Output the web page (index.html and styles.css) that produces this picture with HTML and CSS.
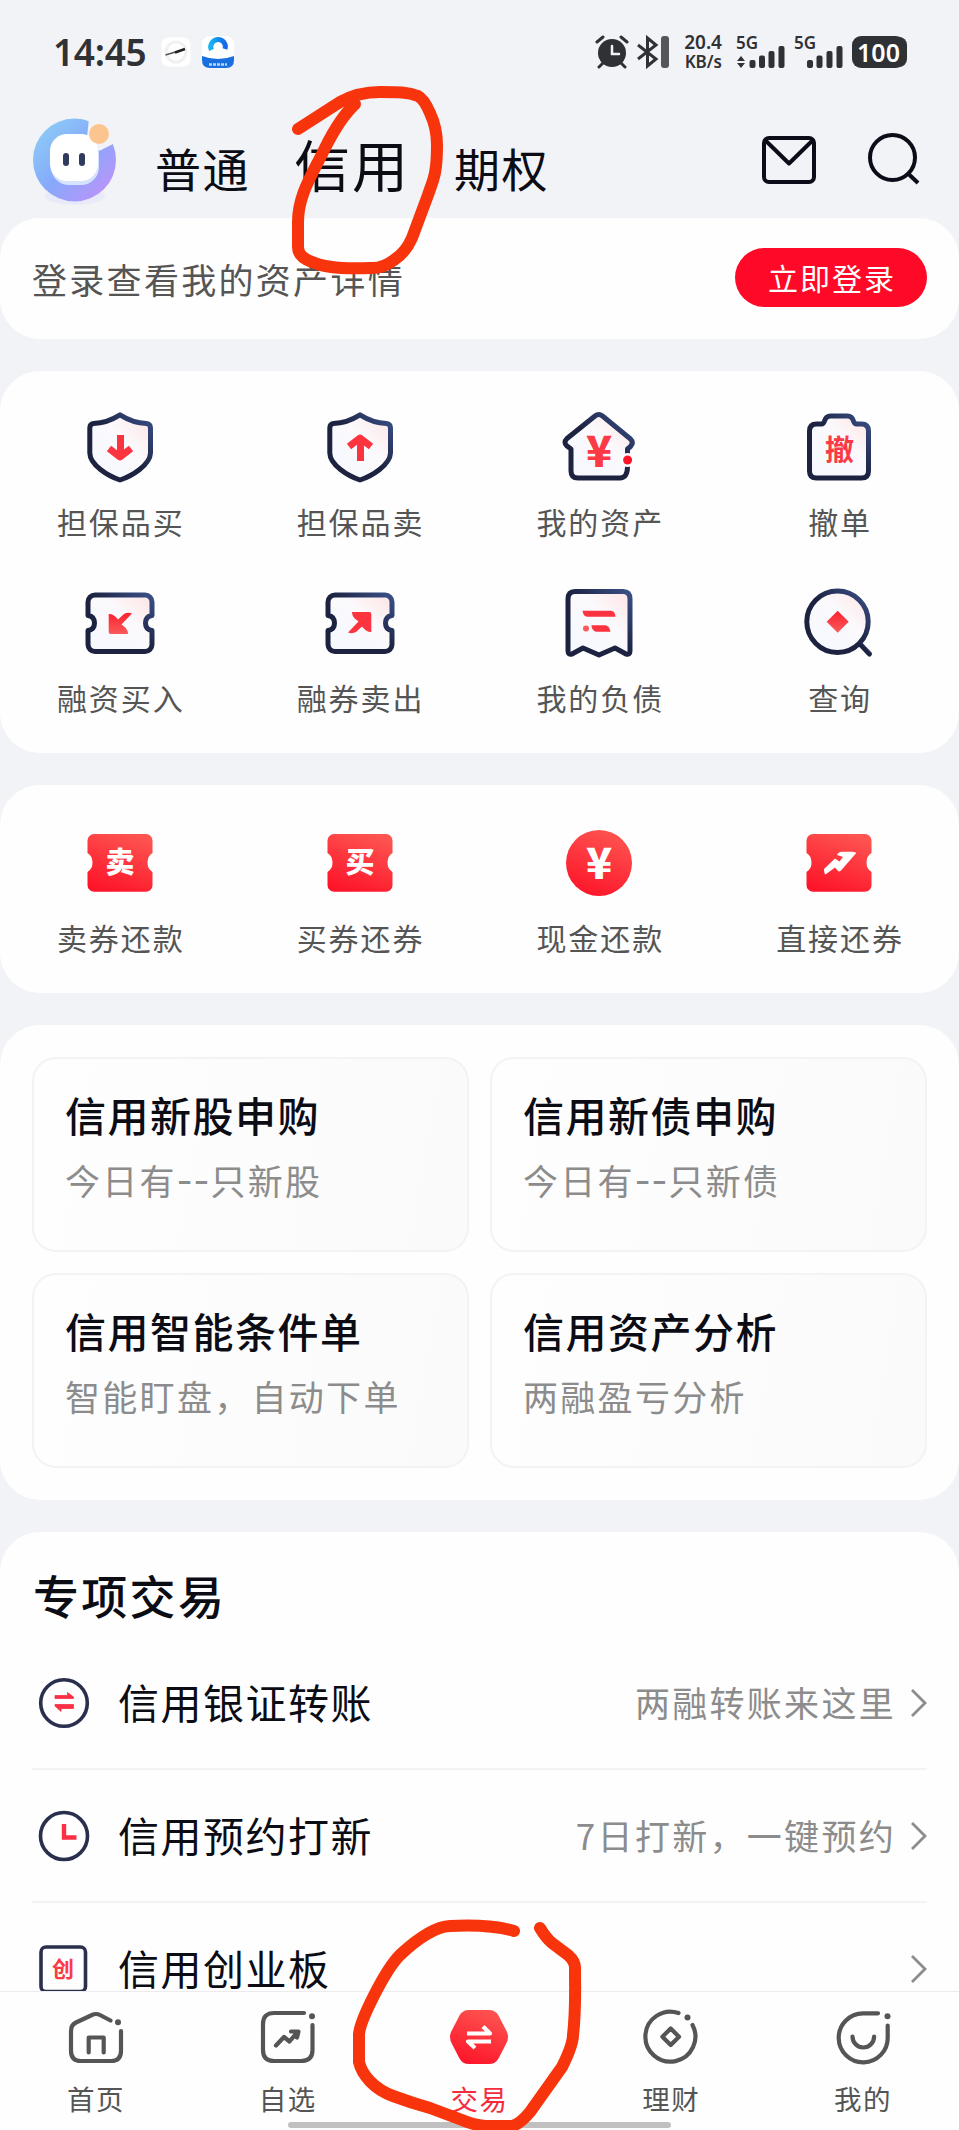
FILE: index.html
```html
<!DOCTYPE html>
<html lang="zh-CN">
<head>
    <meta charset="UTF-8">
    <meta name="viewport" content="width=device-width, initial-scale=1.0">
    <title>信用交易</title>
    <link rel="stylesheet" href="styles.css">
</head>
<body>
    <!-- Shared gradients -->
    <svg class="defs" width="0" height="0">
        <defs>
            <linearGradient id="navy" x1="0" y1="1" x2="1" y2="0">
                <stop offset="0.5" stop-color="#1c2240"/>
                <stop offset="1" stop-color="#3a5088"/>
            </linearGradient>
            <linearGradient id="tint" x1="0" y1="1" x2="1" y2="0">
                <stop offset="0.3" stop-color="#f8f9fe"/>
                <stop offset="0.6" stop-color="#fbf9fc"/>
                <stop offset="1" stop-color="#ffe3e3"/>
            </linearGradient>
            <linearGradient id="red" x1="0" y1="0" x2="0" y2="1">
                <stop offset="0" stop-color="#fa2230"/>
                <stop offset="1" stop-color="#fb5a5a"/>
            </linearGradient>
            <linearGradient id="redfill" x1="0.7" y1="0" x2="0.3" y2="1">
                <stop offset="0" stop-color="#fd5450"/>
                <stop offset="1" stop-color="#fd1529"/>
            </linearGradient>
            <linearGradient id="ring" x1="0" y1="0" x2="1" y2="1">
                <stop offset="0.1" stop-color="#8ccbf6"/>
                <stop offset="0.5" stop-color="#86a9fb"/>
                <stop offset="0.85" stop-color="#b596fa"/>
            </linearGradient>
            <linearGradient id="cloud" x1="0" y1="0" x2="1" y2="0">
                <stop offset="0" stop-color="#17b3f5"/>
                <stop offset="1" stop-color="#1468e8"/>
            </linearGradient>
        </defs>
    </svg>

    <div class="screen">
        <!-- Status bar -->
        <div class="status">
            <span class="time">14:45</span>
            <svg class="app-a" width="30" height="30" viewBox="0 0 30 30">
                <rect x="0.5" y="0.5" width="29" height="29" rx="7" fill="#fff"/>
                <circle cx="15" cy="15" r="10" fill="none" stroke="#f0f1f2" stroke-width="3"/>
                <path d="M4.500 18l10-3" stroke="#555" stroke-width="1.500"/>
                <path d="M14 15.500l10-3.500" stroke="#222" stroke-width="2.500"/>
            </svg>
            <svg class="app-b" width="32" height="32" viewBox="0 0 32 32">
                <rect x="0" y="0" width="32" height="32" rx="8" fill="#fff"/>
                <path d="M0 20q16 6 32 0v4q0 8-8 8H8q-8 0-8-8z" fill="#1a6fe0"/>
                <path d="M9.500 14a7.300 7.300 0 1 1 13.500-1" fill="none" stroke="url(#cloud)" stroke-width="5"/>
                <path d="M7 28.500h18" stroke="#b9d6fa" stroke-width="2.500" stroke-dasharray="3 1"/>
            </svg>
            <div class="status-right">
                <svg class="alarm" width="34" height="34" viewBox="0 0 34 34" fill="none" stroke="#303135" stroke-linecap="round">
                    <circle cx="17" cy="18" r="14" fill="#303135" stroke="none"/>
                    <path d="M2 7l6-5M26 2l6 5M8 28l-4 4M26 28l4 4" stroke-width="3"/>
                    <path d="M17 11v8h7" stroke="#f2f3f7" stroke-width="2.500"/>
                </svg>
                <svg class="bluetooth" width="33" height="34" viewBox="0 0 33 34" fill="none" stroke="#303135" stroke-width="3">
                    <path d="M1 10l18 14-8.500 7V3l8.500 7L1 24"/>
                    <rect x="24" y="1" width="8" height="32" rx="3" fill="#55565a" stroke="none"/>
                </svg>
                <div class="speed">
                    <span class="num">20.4</span>
                    <span class="unit">KB/s</span>
                </div>
                <svg class="signal" width="50" height="44" viewBox="0 -5 50 44" fill="#303135">
                    <text x="0" y="14" class="net">5G</text>
                    <path d="M5 21l4 5H1zM5 33l-4-5h8z"/>
                    <rect x="13.500" y="25" width="6" height="8" rx="2"/>
                    <rect x="23" y="20.500" width="6" height="12.500" rx="2"/>
                    <rect x="32.500" y="16" width="6" height="17" rx="2"/>
                    <rect x="42.500" y="11" width="6" height="22" rx="2"/>
                </svg>
                <svg class="signal" width="50" height="44" viewBox="0 -5 50 44" fill="#303135">
                    <text x="0" y="14" class="net">5G</text>
                    <rect x="13" y="25" width="6" height="8" rx="2"/>
                    <rect x="22.500" y="20.500" width="6" height="12.500" rx="2"/>
                    <rect x="32.500" y="16" width="6" height="17" rx="2"/>
                    <rect x="42.500" y="11" width="6" height="22" rx="2"/>
                </svg>
                <div class="battery">100</div>
            </div>
        </div>

        <!-- Header tabs -->
        <div class="header">
            <svg class="avatar" width="84" height="90" viewBox="0 0 84 90">
                <ellipse cx="42" cy="78" rx="30" ry="9" fill="#e8eafa"/>
                <circle cx="41.500" cy="42" r="41.500" fill="url(#ring)"/>
                <path d="M56 0l28 0v24l-18 9-12-14z" fill="#f2f3f7"/>
                <rect x="18" y="18" width="48" height="49" rx="18" fill="#d5e3ff"/>
                <rect x="17" y="16" width="48" height="47" rx="17" fill="#fff"/>
                <circle cx="66" cy="16" r="10" fill="#fcc48e"/>
                <rect x="30" y="35" width="6" height="13" rx="3" fill="#2f3a5c"/>
                <rect x="46" y="35" width="6" height="13" rx="3" fill="#2f3a5c"/>
            </svg>
            <div class="tabs">
                <span class="tab">普通</span>
                <span class="tab active">信用</span>
                <span class="tab">期权</span>
            </div>
            <svg class="mail" width="54" height="48" viewBox="0 0 54 48" fill="none" stroke="#0b0c18" stroke-width="4" stroke-linejoin="round">
                <rect x="2" y="2" width="50" height="44" rx="5"/>
                <path d="M3.500 4.500L27 27.500 50.500 4.500"/>
            </svg>
            <svg class="search" width="52" height="52" viewBox="0 0 52 52" fill="none" stroke="#0b0c18" stroke-width="4">
                <circle cx="24.500" cy="24.500" r="22.500"/>
                <path d="M39.500 40l10.500 10"/>
            </svg>
        </div>

        <!-- Login -->
        <div class="card login">
            <span class="login-text">登录查看我的资产详情</span>
            <button class="login-btn">立即登录</button>
        </div>

        <!-- Trade shortcuts -->
        <div class="card grid">
            <div class="item">
                <svg class="icon" viewBox="0 0 80 80">
                    <path class="line" d="M40 7.800Q27 16 13.500 16.500 9.800 17 9.800 21V46C10 58 28 69 40 73 52 69 70 58 70.500 46V21Q70.500 17 66.500 16.500 53 16 40 7.800z"/>
                    <path class="mark" d="M40.500 28V48M29 41.500l11 8.500 11-8.500"/>
                </svg>
                <span class="label">担保品买</span>
            </div>
            <div class="item">
                <svg class="icon" viewBox="0 0 80 80">
                    <path class="line" d="M40 7.800Q27 16 13.500 16.500 9.800 17 9.800 21V46C10 58 28 69 40 73 52 69 70 58 70.500 46V21Q70.500 17 66.500 16.500 53 16 40 7.800z"/>
                    <path class="mark" d="M40.500 54V32M29 39.500l11-8.500 11 8.500"/>
                </svg>
                <span class="label">担保品卖</span>
            </div>
            <div class="item">
                <svg class="icon" viewBox="0 0 80 80">
                    <path class="line" d="M68.500 45.500V42l3-2.500q3.500-4 0-7.500L43.500 9q-3.800-3-7.500 0L8 31.500q-4 4 0 7.500l4 3V64q0 7 7 7h42q7 0 7.500-10.500"/>
                    <circle cx="68.600" cy="53" r="7" fill="#fefefe"/>
                    <circle cx="68.600" cy="53" r="4.500" fill="#fd1529"/>
                    <text class="sign" x="40" y="60">¥</text>
                </svg>
                <span class="label">我的资产</span>
            </div>
            <div class="item">
                <svg class="icon" viewBox="0 0 80 80">
                    <path class="line" d="M10.500 24q0-7 7-7h5q2 0 3-3 1.500-5 6-5h17q4.500 0 6 5 1 3 3 3h5q7 0 7 7v40q0 7-7 7h-45q-7 0-7-7z"/>
                    <text class="char" x="40.500" y="53.500">撤</text>
                </svg>
                <span class="label">撤单</span>
            </div>
            <div class="item">
                <svg class="icon" viewBox="0 0 80 80">
                    <path class="line" d="M15 12h50a7 7 0 0 1 7 7v13.500q-6.500 1-6.500 7.500t6.500 7.500v14a7 7 0 0 1-7 7H15a7 7 0 0 1-7-7v-14q6.500-1 6.500-7.500T8 32.500V19a7 7 0 0 1 7-7z"/>
                    <path d="M28.700 31q4-0.500 8 4l1.300 1.500 6-5.500q3.500-2 8-0.500L41.500 41.500l2.500 2q4 3 4 7.500H30.500q-1.800 0-1.800-2z" fill="url(#red)"/>
                </svg>
                <span class="label">融资买入</span>
            </div>
            <div class="item">
                <svg class="icon" viewBox="0 0 80 80">
                    <path class="line" d="M15 12h50a7 7 0 0 1 7 7v13.500q-6.500 1-6.500 7.500t6.500 7.500v14a7 7 0 0 1-7 7H15a7 7 0 0 1-7-7v-14q6.500-1 6.500-7.500T8 32.500V19a7 7 0 0 1 7-7z"/>
                    <path d="M28.700 31q4-0.500 8 4l1.300 1.500 6-5.500q3.500-2 8-0.500L41.500 41.500l2.500 2q4 3 4 7.500H30.500q-1.800 0-1.800-2z" fill="#fb3440" transform="rotate(180 40 40)"/>
                </svg>
                <span class="label">融券卖出</span>
            </div>
            <div class="item">
                <svg class="icon" viewBox="0 0 80 80">
                    <path class="line" d="M9 16q0-7.500 7-7.500h48q7 0 7 7.500v52q0 4-4 3l-11-6-16 7-16-7-11 6q-4 1-4-3z"/>
                    <path d="M23.500 27.700H52q4 0 4.500 6H29q-5 0-5.500-6zM32.300 42.300H46q4 0 5.500 6.400H37q-4-1-4.700-6.400z" fill="#fb3340"/>
                    <circle cx="27" cy="45.500" r="3" fill="#fb5a5a"/>
                </svg>
                <span class="label">我的负债</span>
            </div>
            <div class="item">
                <svg class="icon" viewBox="0 0 80 80">
                    <circle class="line" cx="38.500" cy="38.700" r="30.700"/>
                    <path class="line" d="M61.500 61.500l9 9.500"/>
                    <path d="M38.700 27.700l11 11-11 11-11-11z" fill="url(#red)"/>
                </svg>
                <span class="label">查询</span>
            </div>
        </div>

        <!-- Repayment shortcuts -->
        <div class="card grid repay">
            <div class="item">
                <svg class="icon" viewBox="0 0 80 80">
                    <path d="M14 11h52a6.500 6.500 0 0 1 6.500 6.500V30q-5 3-5 9.500t5 9.500v13.500A6.500 6.500 0 0 1 66 68.700H14a6.500 6.500 0 0 1-6.500-6.500V49q5-3 5-9.500t-5-9.500V17.500A6.500 6.500 0 0 1 14 11z" fill="url(#redfill)"/>
                    <text class="char white" x="40" y="50">卖</text>
                </svg>
                <span class="label">卖券还款</span>
            </div>
            <div class="item">
                <svg class="icon" viewBox="0 0 80 80">
                    <path d="M14 11h52a6.500 6.500 0 0 1 6.500 6.500V30q-5 3-5 9.500t5 9.500v13.500A6.500 6.500 0 0 1 66 68.700H14a6.500 6.500 0 0 1-6.500-6.500V49q5-3 5-9.500t-5-9.500V17.500A6.500 6.500 0 0 1 14 11z" fill="url(#redfill)"/>
                    <text class="char white" x="40" y="50">买</text>
                </svg>
                <span class="label">买券还券</span>
            </div>
            <div class="item">
                <svg class="icon" viewBox="0 0 80 80">
                    <circle cx="40" cy="40" r="33" fill="url(#redfill)"/>
                    <text class="sign white" x="40" y="55.500">¥</text>
                </svg>
                <span class="label">现金还款</span>
            </div>
            <div class="item">
                <svg class="icon" viewBox="0 0 80 80">
                    <path d="M14 11h52a6.500 6.500 0 0 1 6.500 6.500V30q-5 3-5 9.500t5 9.500v13.500A6.500 6.500 0 0 1 66 68.700H14a6.500 6.500 0 0 1-6.500-6.500V49q5-3 5-9.500t-5-9.500V17.500A6.500 6.500 0 0 1 14 11z" fill="url(#redfill)"/>
                    <path d="M25 46l11-10.500 4.500 3L44 34l-6-2q1-3 5-3.300h10q4 0 4 1.500L42 47.500q-2 1.500-3 0.500l-3-3.500-9.500 7q-1.500-1-1.500-5.500z" fill="#fff"/>
                </svg>
                <span class="label">直接还券</span>
            </div>
        </div>

        <!-- Feature tiles -->
        <div class="card tiles">
            <div class="tile">
                <h3>信用新股申购</h3>
                <p>今日有<span class="dash">--</span>只新股</p>
            </div>
            <div class="tile">
                <h3>信用新债申购</h3>
                <p>今日有<span class="dash">--</span>只新债</p>
            </div>
            <div class="tile">
                <h3>信用智能条件单</h3>
                <p>智能盯盘，自动下单</p>
            </div>
            <div class="tile">
                <h3>信用资产分析</h3>
                <p>两融盈亏分析</p>
            </div>
        </div>

        <!-- Special trades -->
        <div class="card special">
            <h2>专项交易</h2>
            <div class="row">
                <svg class="row-icon" viewBox="0 0 60 60" fill="none">
                    <circle cx="30" cy="30" r="23.300" stroke="#2a2f4d" stroke-width="3.600"/>
                    <path d="M21 25.500h18.500V24l-6-4.500v3H21zM39.500 31.500H21V33l6 5.500v-3h12.500z" fill="#fb3045" stroke="#fb3045" stroke-width="0.800"/>
                </svg>
                <span class="name">信用银证转账</span>
                <span class="hint">两融转账来这里</span>
                <svg class="arrow" width="18" height="30" viewBox="0 0 18 30"><path d="M2 2l13 13L2 28"/></svg>
            </div>
            <div class="row">
                <svg class="row-icon" viewBox="0 0 60 60" fill="none">
                    <circle cx="30" cy="30" r="23.500" stroke="#2a2f4d" stroke-width="3.600"/>
                    <path d="M30 18v13.500h12.500" stroke="#fb3045" stroke-width="4.400"/>
                </svg>
                <span class="name">信用预约打新</span>
                <span class="hint">7日打新，一键预约</span>
                <svg class="arrow" width="18" height="30" viewBox="0 0 18 30"><path d="M2 2l13 13L2 28"/></svg>
            </div>
            <div class="row">
                <svg class="row-icon" viewBox="0 0 60 60" fill="none">
                    <rect x="7" y="8" width="44.500" height="44.500" rx="5" stroke="#2a2f4d" stroke-width="3.600"/>
                    <text class="char small" x="29" y="38">创</text>
                </svg>
                <span class="name">信用创业板</span>
                <span class="hint"></span>
                <svg class="arrow" width="18" height="30" viewBox="0 0 18 30"><path d="M2 2l13 13L2 28"/></svg>
            </div>
        </div>
    </div>

    <!-- Bottom navigation -->
    <div class="nav">
        <div class="nav-item">
            <svg class="nav-icon" viewBox="0 0 60 60">
                <path d="M44.500 13.500L34 8q-4-2-8 0l-16 7.500Q5 18 5 24v20q0 10 10 10h30q10 0 10-10V24M22.700 45.500v-15h15v15"/>
                <circle cx="52" cy="15.300" r="3"/>
            </svg>
            <span>首页</span>
        </div>
        <div class="nav-item">
            <svg class="nav-icon" viewBox="0 0 60 60">
                <path d="M46 6H16Q5 6 5 17v26q0 11 11 11h27q11.500 0 11.500-11V18M18 38.500l8-8.500 5.500 4.500 8-9.500M33 24.500h7.500L39 30.500"/>
                <circle cx="54" cy="9.300" r="3"/>
            </svg>
            <span>自选</span>
        </div>
        <div class="nav-item current">
            <svg class="nav-icon" viewBox="0 0 60 60">
                <path class="hex" d="M20 3h20q6.500 0 9.500 5.500L57 23q4 7 0 14l-7.500 14.500Q46.500 57 40 57H20q-6.500 0-9.500-5.500L3 37q-4-7 0-14l7.500-14.500Q13.500 3 20 3z"/>
                <path class="swap" d="M18 26.500h23L34 19.500M42 34.500H19l7 6.500"/>
            </svg>
            <span>交易</span>
        </div>
        <div class="nav-item">
            <svg class="nav-icon" viewBox="0 0 60 60">
                <path d="M37.500 6A25 25 0 1 0 51.500 18M29.700 21.500l8.300 8.300-8.300 8.300-8.300-8.300z"/>
                <circle cx="46.500" cy="10.500" r="3"/>
            </svg>
            <span>理财</span>
        </div>
        <div class="nav-item">
            <svg class="nav-icon" viewBox="0 0 60 60">
                <path d="M45 6.300H30A24.500 24.500 0 1 0 54.700 30V18.500M19.500 29.500a10.800 11 0 0 0 21.600 0"/>
                <circle cx="54.500" cy="9.200" r="3"/>
            </svg>
            <span>我的</span>
        </div>
        <div class="home-bar"></div>
    </div>

    <!-- Hand-drawn markers -->
    <svg class="marks" width="959" height="2130" viewBox="0 0 959 2130">
        <path d="M298 129L340 102Q358 92 380 92C398 92 408 92 418 96Q424 99 430 113Q437 128 437 145C437 175 433 180 428 195L412 238Q406 252 394 260Q382 269 370 268C345 269 325 268 312 262Q298 257 298 247V222C298 195 312 175 325 148Q340 118 355 104"/>
        <path d="M514 1931Q490 1924 450 1926Q430 1927 400 1955C385 1970 359 2022 359 2035V2062C362 2075 374 2089 393 2096Q412 2103 430 2108L462 2120Q474 2125 485 2126H512Q520 2124 530 2112L562 2067Q573 2045 573 2035C576 2010 575 1990 575 1970Q576 1962 568 1955L552 1943Q546 1938 540 1928"/>
    </svg>
</body>
</html>
```
FILE: styles.css
```css
* {
    box-sizing: border-box;
}

body {
    position: relative;
    width: 959px;
    height: 2130px;
    margin: 0;
    overflow: hidden;
    background: #f2f3f7;
    color: #0b0c14;
    font-family: "Noto Sans CJK SC", sans-serif;
}

h2, h3, p {
    margin: 0;
}

.defs {
    position: absolute;
}

.screen {
    height: 1991px;
    overflow: hidden;
    display: flex;
    flex-direction: column;
}

/* Status bar */
.status {
    flex: none;
    height: 103px;
    padding: 0 54px 0 53px;
    display: flex;
    align-items: center;
    color: #303135;
    font-family: "Noto Sans", sans-serif;
}

.time {
    width: 95px;
    font-size: 37px;
    font-weight: 600;
    letter-spacing: -0.300px;
}

.app-a {
    margin-left: 13px;
}

.app-b {
    margin-left: 11px;
}

.status-right {
    margin-left: auto;
    display: flex;
    align-items: center;
}

.bluetooth {
    margin-left: 8px;
}

.speed {
    width: 42px;
    margin: 0 14px 0 10px;
    display: flex;
    flex-direction: column;
    align-items: flex-end;
    font-weight: 600;
}

.speed .num {
    font-size: 19px;
    line-height: 20px;
}

.speed .unit {
    font-size: 17px;
    line-height: 20px;
}

.signal {
    margin-right: 8px;
}

.net {
    font-size: 17px;
    font-weight: 600;
}

.battery {
    width: 53px;
    height: 32px;
    border-radius: 9px;
    background: #303135;
    box-shadow: 3px 0 0 -1px #303135;
    color: #fff;
    font-size: 25px;
    font-weight: 600;
    line-height: 32px;
    text-align: center;
}

/* Header */
.header {
    flex: none;
    height: 115px;
    padding: 0 39px 0 33px;
    display: flex;
    align-items: flex-start;
}

.avatar {
    margin-top: 15px;
}

.tabs {
    margin-left: 38px;
    display: flex;
    align-items: baseline;
    line-height: 80px;
    margin-top: 20px;
}

.tab {
    font-size: 46px;
    letter-spacing: 1.500px;
}

.tab.active {
    margin: 0 44px 0 44px;
    font-size: 56px;
    letter-spacing: 2px;
}

.mail {
    margin: 33px 52px 0 auto;
}

.search {
    margin-top: 30px;
}

/* Cards */
.card {
    flex: none;
    margin-bottom: 32px;
    border-radius: 40px;
    background: #fefefe;
}

.login {
    height: 121px;
    padding: 0 32px;
    display: flex;
    align-items: center;
    justify-content: space-between;
}

.login-text {
    color: #555;
    font-size: 35px;
    letter-spacing: 2.300px;
}

.login-btn {
    width: 192px;
    height: 59px;
    margin-top: -2px;
    padding: 0 0 2px 2px;
    border: none;
    border-radius: 30px;
    background: #fe0a28;
    color: #fff;
    font-family: inherit;
    font-size: 30px;
    letter-spacing: 2px;
}

.grid {
    height: 382px;
    padding-top: 36px;
    display: grid;
    grid-template-columns: repeat(4, 1fr);
    grid-auto-rows: 139px;
    row-gap: 37px;
}

.repay {
    height: 208px;
    padding-top: 38px;
}

.item {
    display: flex;
    flex-direction: column;
    align-items: center;
}

.icon {
    width: 80px;
    height: 80px;
}

.label {
    margin: 12px 0 0 2px;
    color: #555;
    font-size: 30px;
    line-height: 44px;
    letter-spacing: 2px;
}

.line {
    fill: url(#tint);
    stroke: url(#navy);
    stroke-width: 5;
    stroke-linecap: round;
    stroke-linejoin: round;
}

.mark {
    fill: none;
    stroke: #fc3440;
    stroke-width: 7;
    stroke-linejoin: round;
}

.sign, .char {
    fill: #fb3a45;
    font-weight: 900;
    text-anchor: middle;
}

.sign {
    font-size: 43px;
}

.char {
    font-size: 29px;
    font-weight: 700;
}

.char.small {
    font-size: 22px;
}

.white {
    fill: #fff;
    font-weight: 900;
}

/* Tiles */
.tiles {
    height: 475px;
    padding: 32px;
    display: grid;
    grid-template-columns: 1fr 1fr;
    grid-auto-rows: 195px;
    gap: 21px;
}

.tile {
    padding: 27px 31px;
    border: 2px solid #f3f3f4;
    border-radius: 24px;
    background: linear-gradient(100deg, #fefefe, #fafafb);
}

.tile h3 {
    font-size: 41px;
    font-weight: 500;
    line-height: 56px;
    letter-spacing: 1.500px;
}

.tile p {
    margin-top: 13px;
    color: #8c8c8c;
    font-size: 35px;
    line-height: 50px;
    letter-spacing: 2.300px;
}

.dash {
    font-size: 44px;
    line-height: 0;
    letter-spacing: 1.500px;
}

/* Special trades */
.special {
    height: 600px;
    padding: 34px 32px 0;
}

.special h2 {
    margin: 0 0 15px 1px;
    font-size: 46px;
    font-weight: 500;
    line-height: 56px;
    letter-spacing: 2.300px;
}

.row {
    height: 133px;
    display: flex;
    align-items: center;
    border-bottom: 2px solid #f3f3f4;
}

.row-icon {
    width: 60px;
    height: 60px;
    margin-left: 2px;
}

.name {
    margin: -4px 0 0 24px;
    font-size: 41px;
    line-height: 44px;
    letter-spacing: 1.500px;
}

.hint {
    margin: -3px 14px 0 auto;
    color: #8c8c8c;
    font-size: 35px;
    letter-spacing: 2.300px;
}

.arrow {
    margin-right: -1px;
    fill: none;
    stroke: #8c8c8c;
    stroke-width: 2.800;
}

/* Bottom navigation */
.nav {
    position: relative;
    height: 139px;
    padding-top: 15px;
    display: grid;
    grid-template-columns: repeat(5, 1fr);
    border-top: 1px solid #ececee;
    background: #fefefe;
}

.nav-item {
    display: flex;
    flex-direction: column;
    align-items: center;
    color: #555;
    font-size: 27.500px;
    line-height: 36px;
    letter-spacing: 1.500px;
}

.nav-icon {
    width: 60px;
    height: 60px;
    margin-bottom: 13px;
    fill: none;
    stroke: #555;
    stroke-width: 4.200;
    stroke-linecap: round;
    stroke-linejoin: round;
}

.nav-icon circle {
    fill: #555;
    stroke: none;
}

.nav-icon .hex {
    fill: url(#redfill);
    stroke: none;
}

.nav-icon .swap {
    stroke: #fff;
    stroke-linecap: butt;
}

.nav-item.current {
    color: #f52c40;
}

.home-bar {
    position: absolute;
    left: 288px;
    bottom: 2px;
    width: 383px;
    height: 6px;
    border-radius: 3px;
    background: #c0c0c0;
}

.marks {
    position: absolute;
    top: 0;
    left: 0;
    fill: none;
    stroke: #f8340c;
    stroke-width: 12;
    stroke-linecap: round;
    stroke-linejoin: round;
    pointer-events: none;
}
```
